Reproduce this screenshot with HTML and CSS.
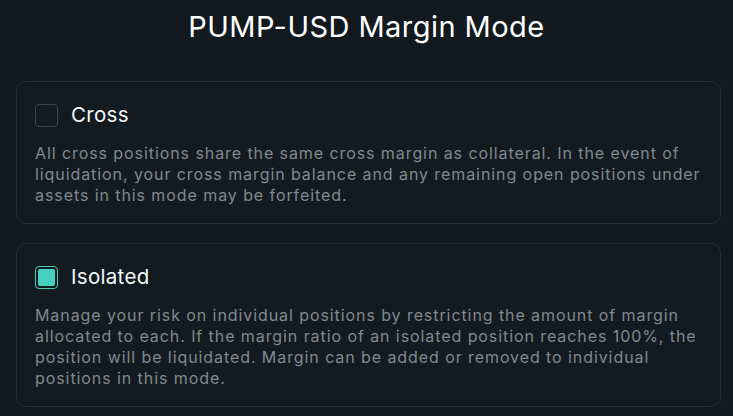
FILE: index.html
```html
<!DOCTYPE html>
<html lang="en">

<head>
    <meta charset="UTF-8">
    <meta name="viewport" content="width=device-width, initial-scale=1.0">
    <title>PUMP-USD Margin Mode</title>
    <link rel="stylesheet" href="styles.css">
</head>

<body>

    <header>
        <h1>PUMP-USD Margin Mode</h1>
    </header>

    <main>
        <!-- Cross -->
        <label class="mode-card">
            <div class="mode-head">
                <span class="check"></span>
                <span class="mode-name">Cross</span>
            </div>
            <p class="mode-desc">All cross positions share the same cross margin as collateral. In the event of liquidation, your cross margin balance and any remaining open positions under assets in this mode may be forfeited.</p>
        </label>

        <!-- Isolated -->
        <label class="mode-card">
            <div class="mode-head">
                <span class="check checked"></span>
                <span class="mode-name">Isolated</span>
            </div>
            <p class="mode-desc">Manage your risk on individual positions by restricting the amount of margin allocated to each. If the margin ratio of an isolated position reaches 100%, the position will be liquidated. Margin can be added or removed to individual positions in this mode.</p>
        </label>
    </main>

</body>

</html>
```

FILE: styles.css
```css
body {
    font-family: Inter, "Noto Sans", sans-serif;
    background-color: #121a1f;
    color: #f2f5f7;
    margin: 0;
    padding: 0;
}

header {
    text-align: center;
    padding: 9px 0 0;
}

h1 {
    margin: 0;
    font-size: 29px;
    font-weight: 400;
    line-height: 36px;
    letter-spacing: 0.45px;
    color: #ffffff;
}

main {
    display: flex;
    flex-direction: column;
    gap: 19px;
    padding: 36px 12px 0 16px;
}

.mode-card {
    display: block;
    border: 1px solid #242e34;
    border-radius: 10px;
    background-color: #131b20;
    padding: 21px 18px 17px;
    cursor: pointer;
}

.mode-head {
    display: flex;
    align-items: center;
    gap: 13px;
}

.check {
    width: 21px;
    height: 21px;
    border: 1px solid #3a444a;
    border-radius: 4px;
    position: relative;
}

.check.checked {
    border-color: #47c9b6;
}

.check.checked::after {
    content: "";
    position: absolute;
    inset: 2px;
    border-radius: 2px;
    background-color: #47d0bd;
}

.mode-name {
    font-size: 20.5px;
    line-height: 24px;
    letter-spacing: 0.3px;
    color: #f4f7f8;
}

.mode-desc {
    margin: 16px 0 0;
    font-size: 16px;
    line-height: 21px;
    letter-spacing: 0.92px;
    color: #80898e;
}
```
